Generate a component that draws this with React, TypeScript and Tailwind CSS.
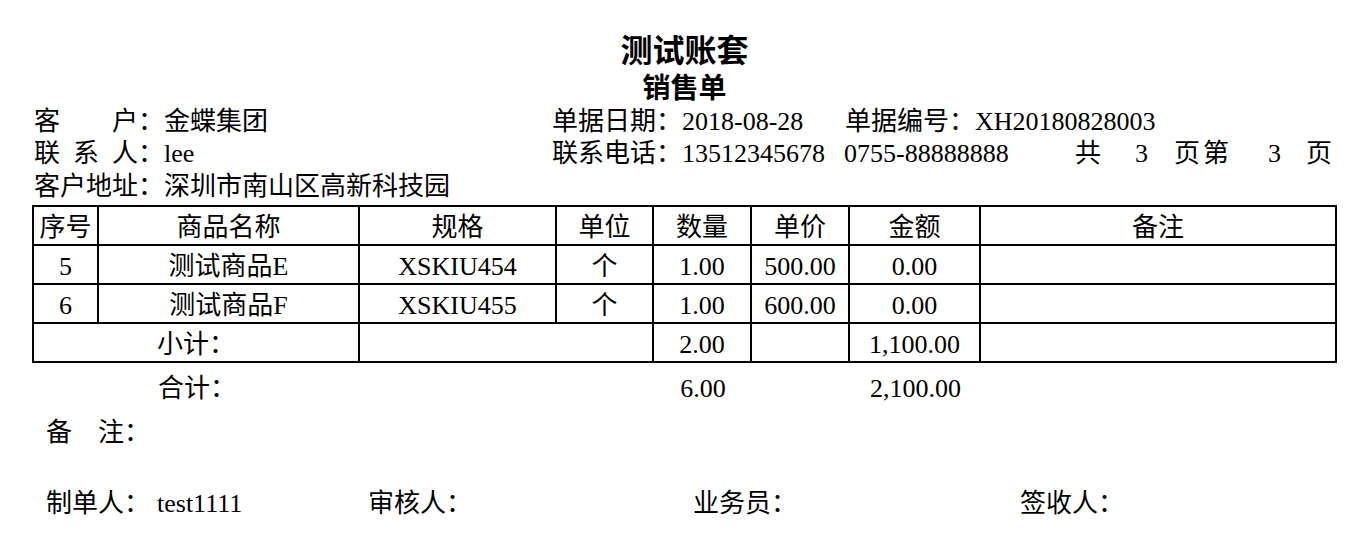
import React from 'react';

const cols = 'grid grid-cols-[65px_261px_197px_97px_98px_98px_131px_354px]';

const header = ['序号', '商品名称', '规格', '单位', '数量', '单价', '金额', '备注'];

const rows = [
  ['5', '测试商品E', 'XSKIU454', '个', '1.00', '500.00', '0.00', ''],
  ['6', '测试商品F', 'XSKIU455', '个', '1.00', '600.00', '0.00', ''],
];

const Cell = ({ children, last = false, span = false, h = 'h-[39px]', bottom = true }: { children?: React.ReactNode; last?: boolean; span?: boolean; h?: string; bottom?: boolean }) => (
  <div
    className={`flex items-center justify-center pt-[4px] border-black whitespace-nowrap ${h} ${last ? '' : 'border-r-2'} ${bottom ? 'border-b-2' : ''} ${span ? 'col-span-2' : ''}`}
  >
    {children}
  </div>
);

const Label = ({ chars, width }: { chars: string[]; width: string }) => (
  <span className="flex">
    <span className={`flex justify-between ${width}`}>
      {chars.map((c) => (
        <span key={c}>{c}</span>
      ))}
    </span>
    <span className="w-[26px]">：</span>
  </span>
);

export default function App() {
  return (
    <div className="w-[1352px] h-[545px] bg-white text-black text-[26px] font-['Liberation_Serif','Noto_Sans_CJK_SC',serif] overflow-hidden">
      {/* title */}
      <div className="pl-[32px] w-[1337px]">
        <div className="pt-[33px] text-center text-[32px] leading-[36px] font-bold">测试账套</div>
        <div className="mt-[3px] text-center text-[28px] leading-[34px] font-bold">销售单</div>
      </div>

      {/* header info */}
      <div className="pl-[34px] leading-[32px]">
        <div className="flex h-[32px]">
          <div className="flex w-[518px]">
            <Label chars={['客', '户']} width="w-[104px]" />
            <span>金蝶集团</span>
          </div>
          <div className="w-[293px]">单据日期：2018-08-28</div>
          <div>单据编号：XH20180828003</div>
        </div>
        <div className="flex h-[32px]">
          <div className="flex w-[518px]">
            <Label chars={['联', '系', '人']} width="w-[104px]" />
            <span>lee</span>
          </div>
          <div className="flex w-[523px]">
            <span>联系电话：13512345678</span>
            <span className="ml-[19px]">0755-88888888</span>
          </div>
          <div className="flex">
            <span>共</span>
            <span className="w-[73px] pl-[34px]">3</span>
            <span>页</span>
            <span className="w-[3px]" />
            <span>第</span>
            <span className="w-[77px] pl-[39px]">3</span>
            <span>页</span>
          </div>
        </div>
        <div className="flex h-[33px] pt-[1px]">
          <Label chars={['客', '户', '地', '址']} width="w-[104px]" />
          <span>深圳市南山区高新科技园</span>
        </div>
      </div>

      {/* table */}
      <div className="ml-[32px] mt-[2px] w-[1305px] border-2 border-black">
        <div className={cols}>
          {header.map((t, i) => (
            <Cell key={t} last={i === 7}>
              {t}
            </Cell>
          ))}
          {rows.map((r) =>
            r.map((t, i) => (
              <Cell key={r[0] + i} last={i === 7}>
                {t}
              </Cell>
            ))
          )}
          <Cell span bottom={false} h="h-[37px]">小计：</Cell>
          <Cell span bottom={false} h="h-[37px]" />
          <Cell bottom={false} h="h-[37px]">2.00</Cell>
          <Cell bottom={false} h="h-[37px]" />
          <Cell bottom={false} h="h-[37px]">1,100.00</Cell>
          <Cell bottom={false} last h="h-[37px]" />
        </div>
      </div>

      {/* totals */}
      <div className={`${cols} ml-[34px] mt-[10px] h-[32px] leading-[32px]`}>
        <div className="col-span-2 text-center">合计：</div>
        <div className="col-span-2" />
        <div className="text-center">6.00</div>
        <div />
        <div className="text-center">2,100.00</div>
        <div />
      </div>

      {/* remark */}
      <div className="ml-[46px] mt-[12px] h-[32px] leading-[32px]">
        <Label chars={['备', '注']} width="w-[78px]" />
      </div>

      {/* signatures */}
      <div className="ml-[46px] mt-[39px] flex h-[32px] leading-[32px]">
        <div className="flex w-[322px]">
          <span>制单人：</span>
          <span className="ml-[7px]">test1111</span>
        </div>
        <div className="w-[325px]">审核人：</div>
        <div className="w-[327px]">业务员：</div>
        <div>签收人：</div>
      </div>
    </div>
  );
}
